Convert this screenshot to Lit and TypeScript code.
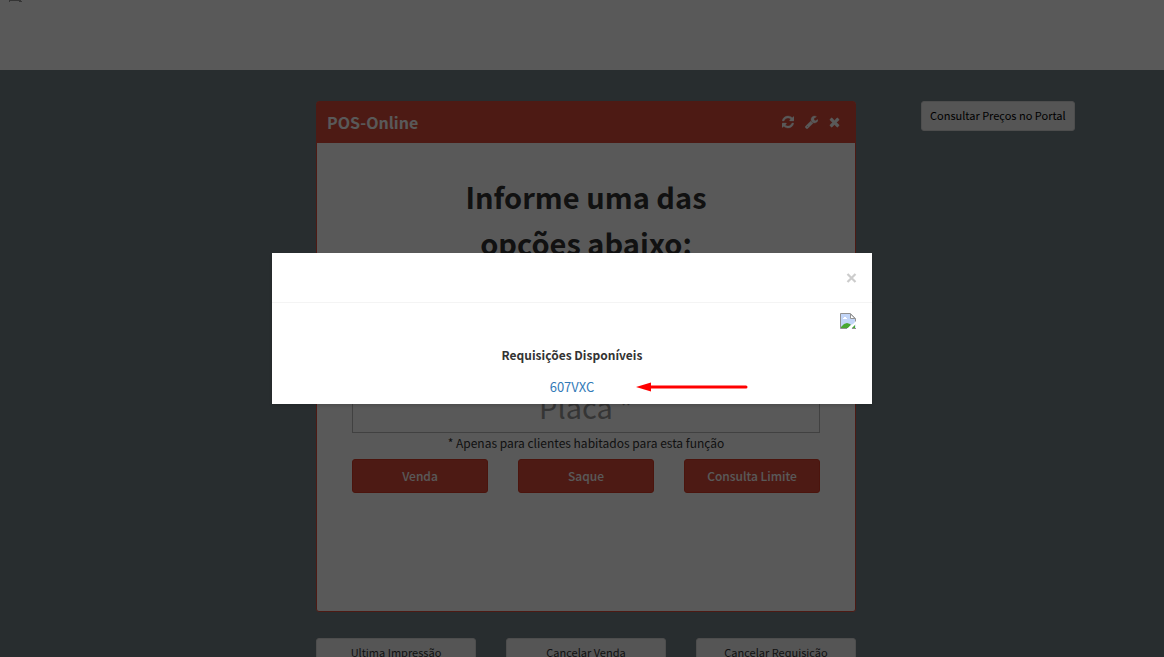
import { LitElement, html, css, svg } from "lit";
import { customElement, property } from "lit/decorators.js";

const ICONS: Record<string, { width: number; path: string }> = {
  refresh: {
    width: 1536,
    path: "M1511 1056q0 5-1 7-64 268-268 434.5t-478 166.5q-146 0-282.5-55t-243.5-157l-129 129q-19 19-45 19t-45-19-19-45v-448q0-26 19-45t45-19h448q26 0 45 19t19 45-19 45l-137 137q71 66 161 102t187 36q134 0 250-65t186-179q11-17 53-117 8-23 30-23h192q13 0 22.5 9.5t9.5 22.5zm25-800v448q0 26-19 45t-45 19h-448q-26 0-45-19t-19-45 19-45l138-138q-148-137-349-137-134 0-250 65t-186 179q-11 17-53 117-8 23-30 23h-199q-13 0-22.5-9.5t-9.5-22.5v-7q65-268 270-434.5t480-166.5q146 0 284 55.5t245 156.5l130-129q19-19 45-19t45 19 19 45z",
  },
  wrench: {
    width: 1664,
    path: "M384 1472q0-26-19-45t-45-19-45 19-19 45 19 45 45 19 45-19 19-45zm644-420l-682 682q-37 37-90 37-52 0-91-37l-106-108q-38-36-38-90 0-53 38-91l681-681q39 98 114.5 173.5t173.5 114.5zm634-435q0 39-23 106-47 134-164.5 217.5t-258.5 83.5q-185 0-316.5-131.5t-131.5-316.5 131.5-316.5 316.5-131.5q58 0 121.5 16.5t107.5 46.5q16 11 16 28t-16 28l-293 169v224l193 107q5-3 79-48.5t135.5-81 70.5-35.5q15 0 23.5 10t8.5 25z",
  },
  times: {
    width: 1408,
    path: "M1298 1322q0 40-28 68l-136 136q-28 28-68 28t-68-28l-294-294-294 294q-28 28-68 28t-68-28l-136-136q-28-28-28-68t28-68l294-294-294-294q-28-28-28-68t28-68l136-136q28-28 68-28t68 28l294 294 294-294q28-28 68-28t68 28l136 136q28 28 28 68t-28 68l-294 294 294 294q28 28 28 68z",
  },
};

@customElement("tool-icon")
class ToolIcon extends LitElement {
  @property() name = "times";
  static styles = css`
    :host { display: block; height: 14px; }
    svg { display: block; height: 14px; fill: currentColor; stroke: currentColor; stroke-width: 40; }
  `;
  render() {
    const icon = ICONS[this.name];
    return html`<svg viewBox="0 0 ${icon.width} 1792" aria-hidden="true">${svg`<path d=${icon.path}></path>`}</svg>`;
  }
}

@customElement("requests-dialog")
class RequestsDialog extends LitElement {
  static styles = css`
    :host {
      position: absolute;
      inset: 0;
      display: flex;
      align-items: center;
      justify-content: center;
      padding-right: 20px;
      background: rgba(0, 0, 0, 0.65);
    }
    .dialog {
      width: 600px;
      max-width: 100%;
      background: #fff;
      color: #333;
      box-shadow: 0 2px 3px rgba(0, 0, 0, 0.13);
    }
    .top {
      display: flex;
      justify-content: flex-end;
      align-items: center;
      height: 49px;
      padding-right: 15px;
      border-bottom: 1px solid #f4f4f4;
    }
    .close {
      display: block;
      padding: 0;
      border: 0;
      background: none;
      color: #ccc;
    }
    .close svg, .missing { display: block; }
    .image-row {
      display: flex;
      justify-content: flex-end;
      padding: 10px 16px 0 0;
    }
    h4 {
      margin: 16px 0 0;
      font-size: 12px;
      line-height: 20px;
      font-weight: 700;
      text-align: center;
    }
    .choice {
      display: grid;
      grid-template-columns: 1fr auto 1fr;
      align-items: center;
      padding: 12px 0 7px;
    }
    a {
      grid-column: 2;
      color: #337ab7;
      font-size: 13px;
      line-height: 20px;
      text-decoration: none;
    }
    .arrow { display: block; margin-left: 42px; }
  `;
  render() {
    return html`
      <section class="dialog" role="dialog" aria-modal="true" aria-labelledby="title">
        <div class="top">
          <button class="close" aria-label="Fechar">
            <svg width="11" height="10" viewBox="0 0 11 10"><path d="M1.5 1L9.5 9M9.5 1L1.5 9" stroke="currentColor" stroke-width="2.2"/></svg>
          </button>
        </div>
        <div class="image-row">
          <svg class="missing" width="16" height="16" viewBox="0 0 16 16" aria-hidden="true">
            <path d="M.5.5h10l5 5v10H.5z" fill="#c2d5f7"/>
            <path d="M3 6V5h1V4h2v1h1v1z" fill="#fff"/>
            <path d="M1 15v-1l3-3 3-1 3 1 1 1-3 3z" fill="#49a832"/>
            <path d="M15.500 5.500v5M.5 15.500V.5h10l5 5M.5 15.500H7M12 15.500h4" fill="none" stroke="#929292"/>
            <path d="M10.500 1v4.500h4.500z" fill="#fff" stroke="#929292"/>
            <path d="M7 16l4-4 2-1 3-3v3l-5 5z" fill="#fff"/>
            <path d="M12 15l3-3v3z" fill="#49a832"/>
          </svg>
        </div>
        <h4 id="title">Requisições Disponíveis</h4>
        <div class="choice">
          <a href="#607VXC">607VXC</a>
          <svg class="arrow" width="112" height="10" viewBox="0 0 112 10" aria-hidden="true">
            <path d="M0 5L15 .5v9z" fill="#f00"/><path d="M14 5h96" stroke="#f00" stroke-width="3" stroke-linecap="round"/>
          </svg>
        </div>
      </section>`;
  }
}

@customElement("app-root")
class AppRoot extends LitElement {
  static styles = css`
    :host {
      position: relative;
      display: block;
      height: 100vh;
      overflow: hidden;
      background: #728087;
      color: #333;
      font-family: "Noto Sans CJK SC", "Noto Sans", sans-serif;
      font-size: 12px;
      line-height: 20px;
    }
    * { box-sizing: border-box; }
    button, input { font-family: inherit; }
    .bar {
      height: 70px;
      padding-left: 9px;
      background: #fff;
    }
    .bar svg { display: block; }
    .layout {
      display: grid;
      grid-template-columns: 1fr 2fr 1fr;
      padding: 31px 8px 0 16px;
    }
    .main { grid-column: 2; padding: 0 15px; }
    .side { padding-left: 50px; }
    .card {
      min-height: 511px;
      border: 1px solid #dd4b39;
      border-radius: 3px;
      background: #fff;
    }
    .card-head {
      display: flex;
      align-items: center;
      justify-content: space-between;
      height: 41px;
      padding: 0 15px 2px 10px;
      background: #dd4b39;
      color: #fff;
    }
    h3 { margin: 0; font-size: 16px; line-height: 20px; font-weight: 700; }
    .tools { display: flex; gap: 11px; }
    .tool { padding: 0; border: 0; background: none; color: #fff; }
    .card-body { padding: 30px 35px; text-align: center; }
    h1 {
      max-width: 300px;
      margin: 0 auto;
      font-size: 29px;
      line-height: 46px;
      font-weight: 700;
    }
    .plate {
      display: block;
      width: 100%;
      height: 50px;
      margin-top: 118px;
      padding: 0 0 4px;
      border: 1px solid #bbb;
      background: #fff;
      font-size: 29px;
      text-align: center;
    }
    .plate::placeholder { color: #999; opacity: 1; }
    .note { margin: 0; padding: 0 0 6px; }
    .actions, .footer { display: grid; grid-template-columns: repeat(3, 1fr); gap: 30px; }
    .action {
      height: 34px;
      padding: 0 0 2px;
      border: 1px solid #d73925;
      border-radius: 3px;
      background: #dd4b39;
      color: #fff;
      font-size: 12px;
      font-weight: 500;
    }
    .footer { margin-top: 26px; }
    .plain {
      height: 30px;
      padding: 0 8px 2px;
      border: 1px solid #ddd;
      border-radius: 3px;
      background: #f4f4f4;
      color: #333;
      font-size: 11px;
    }
    .side .plain { color: #000; }
  `;
  render() {
    return html`
      <header class="bar">
        <svg width="14" height="2" viewBox="0 0 14 2" aria-hidden="true"><path d="M0 0h12v1h1v1h-3V1H1v1H0z" fill="#999"/></svg>
      </header>
      <div class="layout">
        <main class="main">
          <section class="card">
            <div class="card-head">
              <h3>POS-Online</h3>
              <div class="tools">
                <button class="tool" aria-label="Atualizar"><tool-icon name="refresh"></tool-icon></button>
                <button class="tool" aria-label="Configurar"><tool-icon name="wrench"></tool-icon></button>
                <button class="tool" aria-label="Remover"><tool-icon name="times"></tool-icon></button>
              </div>
            </div>
            <div class="card-body">
              <h1>Informe uma das opções abaixo:</h1>
              <input class="plate" aria-label="Placa" placeholder="Placa *" />
              <p class="note">* Apenas para clientes habitados para esta função</p>
              <div class="actions">
                ${["Venda", "Saque", "Consulta Limite"].map((t) => html`<button class="action">${t}</button>`)}
              </div>
            </div>
          </section>
          <div class="footer">
            ${["Ultima Impressão", "Cancelar Venda", "Cancelar Requisição"].map((t) => html`<button class="plain">${t}</button>`)}
          </div>
        </main>
        <aside class="side"><button class="plain">Consultar Preços no Portal</button></aside>
      </div>
      <requests-dialog></requests-dialog>`;
  }
}
